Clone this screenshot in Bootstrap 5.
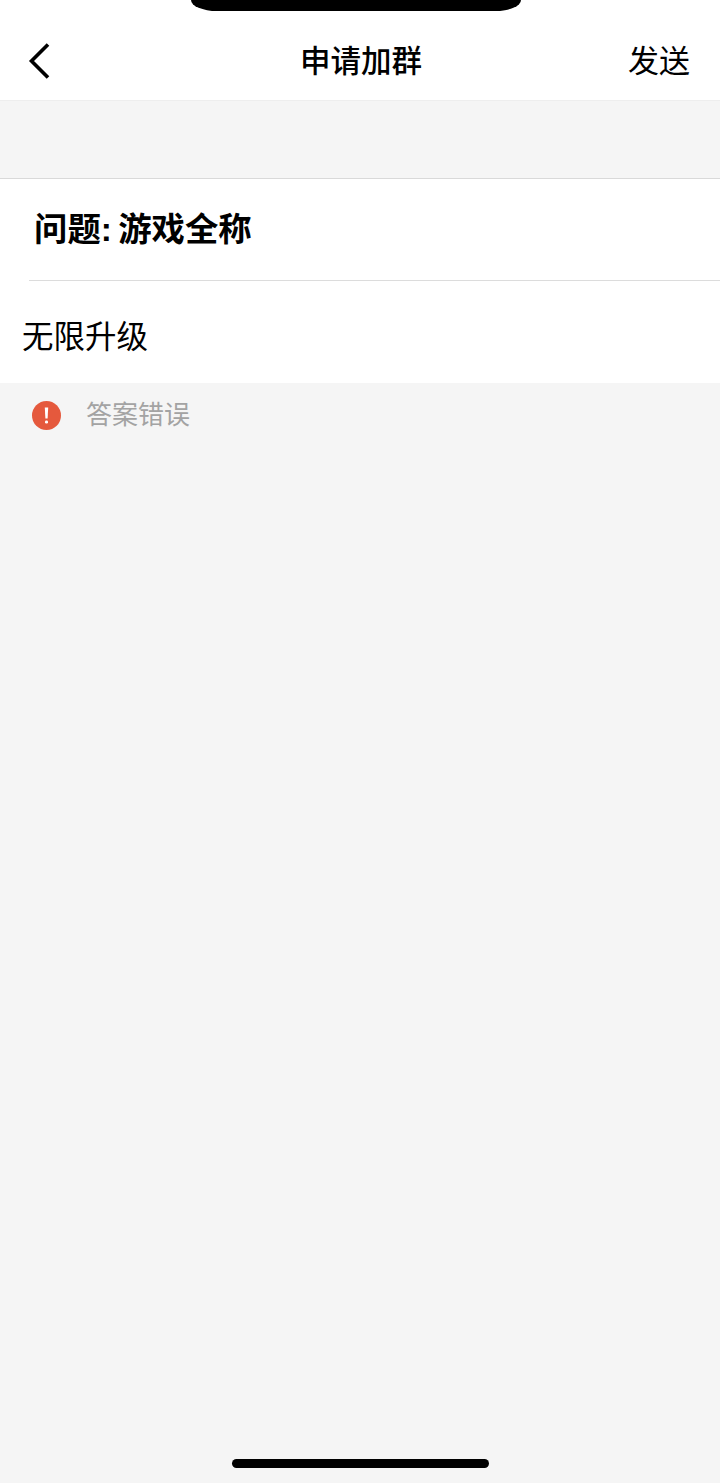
<!DOCTYPE html>
<html lang="zh">
<head>
  <meta charset="UTF-8" />
  <meta name="viewport" content="width=device-width, initial-scale=1" />
  <title>申请加群</title>
  <link href="https://cdn.jsdelivr.net/npm/bootstrap@5.3.2/dist/css/bootstrap.min.css" rel="stylesheet" />
  <style>
    body {
      background: #f5f5f5;
      font-family: "Liberation Sans", "Noto Sans CJK SC", sans-serif;
      color: #000;
    }
    .page-wrap { height: 1483px; }
    .top-area { background: #fff; height: 101px; border-bottom: 1px solid #eeeeee; }
    .notch {
      width: 330px;
      height: 11px;
      margin-left: 191px;
      background: #000;
      border-radius: 0 0 26px 26px / 0 0 11px 11px;
    }
    .nav-row { height: 89px; padding: 12px 30px 0 28px; }
    .nav-side { flex: 1 1 0; }
    .nav-back { display: block; margin-top: -1px; }
    .nav-title { font-size: 30.5px; font-weight: 500; line-height: 1; margin-left: 4px; }
    .nav-send { font-size: 31px; line-height: 1; }
    .gap-band { height: 77px; }
    .form-box { background: #fff; border-top: 1px solid #d9d9d9; height: 205px; }
    .question { height: 101px; padding-left: 34px; font-size: 33.4px; font-weight: 700; line-height: 1; word-spacing: -3px; }
    .divider { height: 1px; margin-left: 29px; background: #dcdcdc; }
    .answer { height: 102px; padding: 12px 0 0 22px; font-size: 31.5px; line-height: 1; }
    .error-row { height: 64px; padding-left: 32px; gap: 25px; color: #a3a3a3; font-size: 26px; line-height: 1; }
    .home-bar { width: 257px; height: 9px; background: #000; border-radius: 5px; margin: auto auto 15px; }
  </style>
</head>
<body>
  <div class="page-wrap d-flex flex-column">
    <!-- header -->
    <div class="top-area">
      <div class="notch"></div>
      <div class="nav-row d-flex align-items-center">
        <div class="nav-side">
          <svg class="nav-back" width="22" height="36" viewBox="0 0 22 36" fill="none" stroke="#000" stroke-width="3.6" aria-label="返回">
            <path d="M20 1.5 3.5 18 20 34.5" />
          </svg>
        </div>
        <div class="nav-title">申请加群</div>
        <div class="nav-side d-flex justify-content-end">
          <div class="nav-send">发送</div>
        </div>
      </div>
    </div>

    <div class="gap-band"></div>

    <!-- question + answer -->
    <div class="form-box">
      <div class="question d-flex align-items-center">问题: 游戏全称</div>
      <div class="divider"></div>
      <div class="answer d-flex align-items-center">无限升级</div>
    </div>

    <div class="error-row d-flex align-items-center">
      <svg width="29" height="29" viewBox="0 0 29 29" aria-hidden="true">
        <circle cx="14.5" cy="14.5" r="14.5" fill="#e5593d" />
        <path d="M12.8 6.5h3.4l-.6 11h-2.2z" fill="#fff" />
        <rect x="13" y="19.5" width="3" height="3" rx="1.2" fill="#fff" />
      </svg>
      <span>答案错误</span>
    </div>

    <div class="home-bar"></div>
  </div>
  <script src="https://cdn.jsdelivr.net/npm/bootstrap@5.3.2/dist/js/bootstrap.bundle.min.js"></script>
</body>
</html>
